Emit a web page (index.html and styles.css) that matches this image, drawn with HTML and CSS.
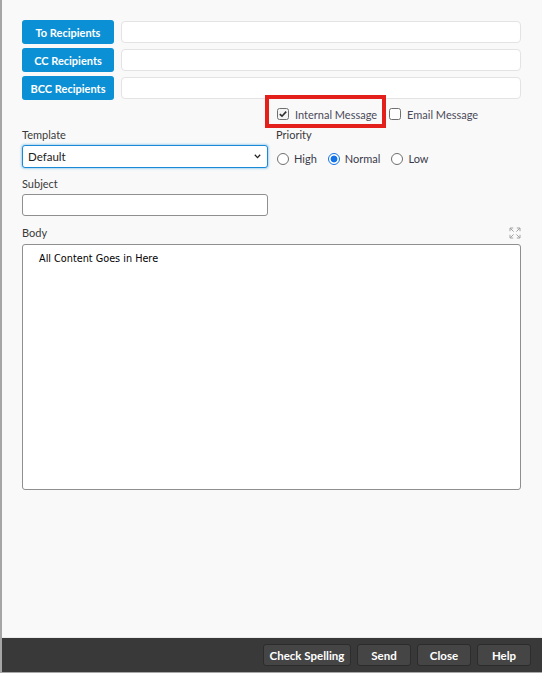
FILE: index.html
```html
<!DOCTYPE html>
<html>
<head>
<meta charset="utf-8">
<link rel="stylesheet" href="styles.css">
</head>
<body>
<div class="page">
  <div class="content">
    <div class="recipients">
      <button class="rbtn">To Recipients</button>
      <div class="rinput"></div>
      <button class="rbtn">CC Recipients</button>
      <div class="rinput"></div>
      <button class="rbtn">BCC Recipients</button>
      <div class="rinput"></div>
    </div>

    <div class="cols opts">
      <div></div>
      <div class="checks">
        <span class="highlight"></span>
        <label class="check">
          <svg class="cbox" width="12" height="12" viewBox="0 0 12 12"><rect x="0.5" y="0.5" width="11" height="11" rx="2" fill="#f4f4f4" stroke="#6f6f6f"/><path d="M2.8 6.1 L5 8.2 L9.2 3.6" fill="none" stroke="#2f2f2f" stroke-width="1.6"/></svg>
          <span>Internal Message</span>
        </label>
        <label class="check email">
          <svg class="cbox" width="12" height="12" viewBox="0 0 12 12"><rect x="0.5" y="0.5" width="11" height="11" rx="2" fill="#ffffff" stroke="#6f6f6f"/></svg>
          <span>Email Message</span>
        </label>
      </div>
    </div>

    <div class="cols">
      <div class="left">
        <div class="lbl">Template</div>
        <div class="select">
          <span>Default</span>
          <svg width="7" height="5" viewBox="0 0 7 5"><path d="M0.8 0.8 L3.5 3.6 L6.2 0.8" fill="none" stroke="#222" stroke-width="1.3"/></svg>
        </div>
        <div class="lbl subj">Subject</div>
        <div class="field"></div>
      </div>
      <div class="right">
        <div class="lbl">Priority</div>
        <div class="radios">
          <span class="radio"></span><span class="rtxt">High</span>
          <span class="radio on"></span><span class="rtxt">Normal</span>
          <span class="radio"></span><span class="rtxt">Low</span>
        </div>
      </div>
    </div>

    <div class="bodyhead">
      <div class="lbl">Body</div>
      <svg class="expand" width="12" height="12" viewBox="0 0 12 12" fill="none" stroke="#a3a3a3" stroke-width="1">
        <path d="M1 1 L4.6 4.6 M1 1 H4.2 M1 1 V4.2"/>
        <path d="M11 1 L7.4 4.6 M11 1 H7.8 M11 1 V4.2"/>
        <path d="M1 11 L4.6 7.4 M1 11 H4.2 M1 11 V7.8"/>
        <path d="M11 11 L7.4 7.4 M11 11 H7.8 M11 11 V7.8"/>
      </svg>
    </div>
    <div class="editor">All Content Goes in Here</div>
  </div>

  <div class="footer">
    <button class="fbtn wide">Check Spelling</button>
    <button class="fbtn">Send</button>
    <button class="fbtn">Close</button>
    <button class="fbtn">Help</button>
  </div>
</div>
</body>
</html>
```

FILE: styles.css
```css
html, body {
  margin: 0;
  padding: 0;
  background: #f9f9f9;
}

.page {
  height: 673px;
  border-left: 2px solid #a6a6a6;
  box-sizing: border-box;
  display: flex;
  flex-direction: column;
  font-family: Lato, "Open Sans", sans-serif;
  font-size: 11px;
  color: #3a3a3a;
}

.content {
  padding: 20px 21px 0 20px;
  flex: 1;
}

.recipients {
  display: grid;
  grid-template-columns: 92px 1fr;
  grid-auto-rows: 24px;
  column-gap: 7px;
  row-gap: 4px;
  align-items: center;
}

.rbtn {
  height: 24px;
  background: #0b8fd5;
  border: none;
  border-radius: 3px;
  color: #fff;
  font-family: Lato, sans-serif;
  font-weight: 700;
  font-size: 11px;
  padding: 0;
}

.rinput {
  height: 22px;
  box-sizing: border-box;
  background: #fff;
  border: 1px solid #e3e3e3;
  border-radius: 4px;
}

.cols {
  display: grid;
  grid-template-columns: 246px 1fr;
  column-gap: 8px;
}

.opts {
  margin-top: 4px;
}

.checks {
  position: relative;
  display: flex;
  align-items: center;
  height: 20px;
  padding-left: 1px;
}

.highlight {
  position: absolute;
  left: -11px;
  top: -9px;
  width: 121px;
  height: 33px;
  box-sizing: border-box;
  border: 4px solid #e3201b;
}

.check {
  display: flex;
  align-items: center;
  color: #4a4a5a;
}

.check .cbox {
  margin-right: 6px;
}

.check.email {
  margin-left: 12px;
}

.check.email .cbox {
  margin-right: 6px;
}

.lbl {
  height: 14px;
  line-height: 14px;
  margin-top: 4px;
}

.select {
  margin-top: 3px;
  height: 23px;
  box-sizing: border-box;
  background: #fff;
  border: 1px solid #1a8ad6;
  border-radius: 3px;
  box-shadow: 0 0 2px 1px rgba(80, 170, 230, 0.45);
  display: flex;
  align-items: center;
  justify-content: space-between;
  padding: 0 6px 0 5px;
  color: #222;
  font-size: 11.5px;
}

.subj {
  margin-top: 9px;
}

.field {
  margin-top: 3px;
  height: 22px;
  box-sizing: border-box;
  background: #fff;
  border: 1px solid #8f8f8f;
  border-radius: 3px;
}

.radios {
  display: flex;
  align-items: center;
  margin-top: 10px;
  padding-left: 1px;
}

.radio {
  width: 12px;
  height: 12px;
  box-sizing: border-box;
  border: 1px solid #6f6f6f;
  border-radius: 50%;
  background: #fff;
}

.radio.on {
  border-color: #1473e6;
  background: radial-gradient(circle, #1473e6 0 3.2px, #fff 3.7px);
}

.rtxt {
  margin-left: 5px;
  margin-right: 11px;
  color: #3a3a4a;
}

.bodyhead {
  margin-top: 10px;
  display: flex;
  justify-content: space-between;
  align-items: center;
}

.bodyhead .lbl {
  margin-top: 0;
}

.expand {
  margin-right: 0;
}

.editor {
  margin-top: 4px;
  height: 246px;
  box-sizing: border-box;
  background: #fff;
  border: 1px solid #8f8f8f;
  border-radius: 3px;
  padding: 8px 16px;
  font-family: "DejaVu Sans", Verdana, sans-serif;
  font-size: 9.7px;
  color: #000;
}

.footer {
  border-top: 1px solid #ececec;
  border-bottom: 1px solid #a8a8a8;
  background: #393939;
  height: 34px;
  display: flex;
  justify-content: flex-end;
  align-items: flex-start;
  gap: 6px;
  padding: 6px 11px 0 0;
  box-sizing: content-box;
}

.footer {
  height: 28px;
}

.fbtn {
  width: 54px;
  height: 22px;
  background: #454545;
  border: 1px solid #2c2c2c;
  border-radius: 3px;
  color: #fff;
  font-family: Lato, sans-serif;
  font-weight: 700;
  font-size: 11.5px;
  padding: 0;
}

.fbtn.wide {
  width: 88px;
}
```
